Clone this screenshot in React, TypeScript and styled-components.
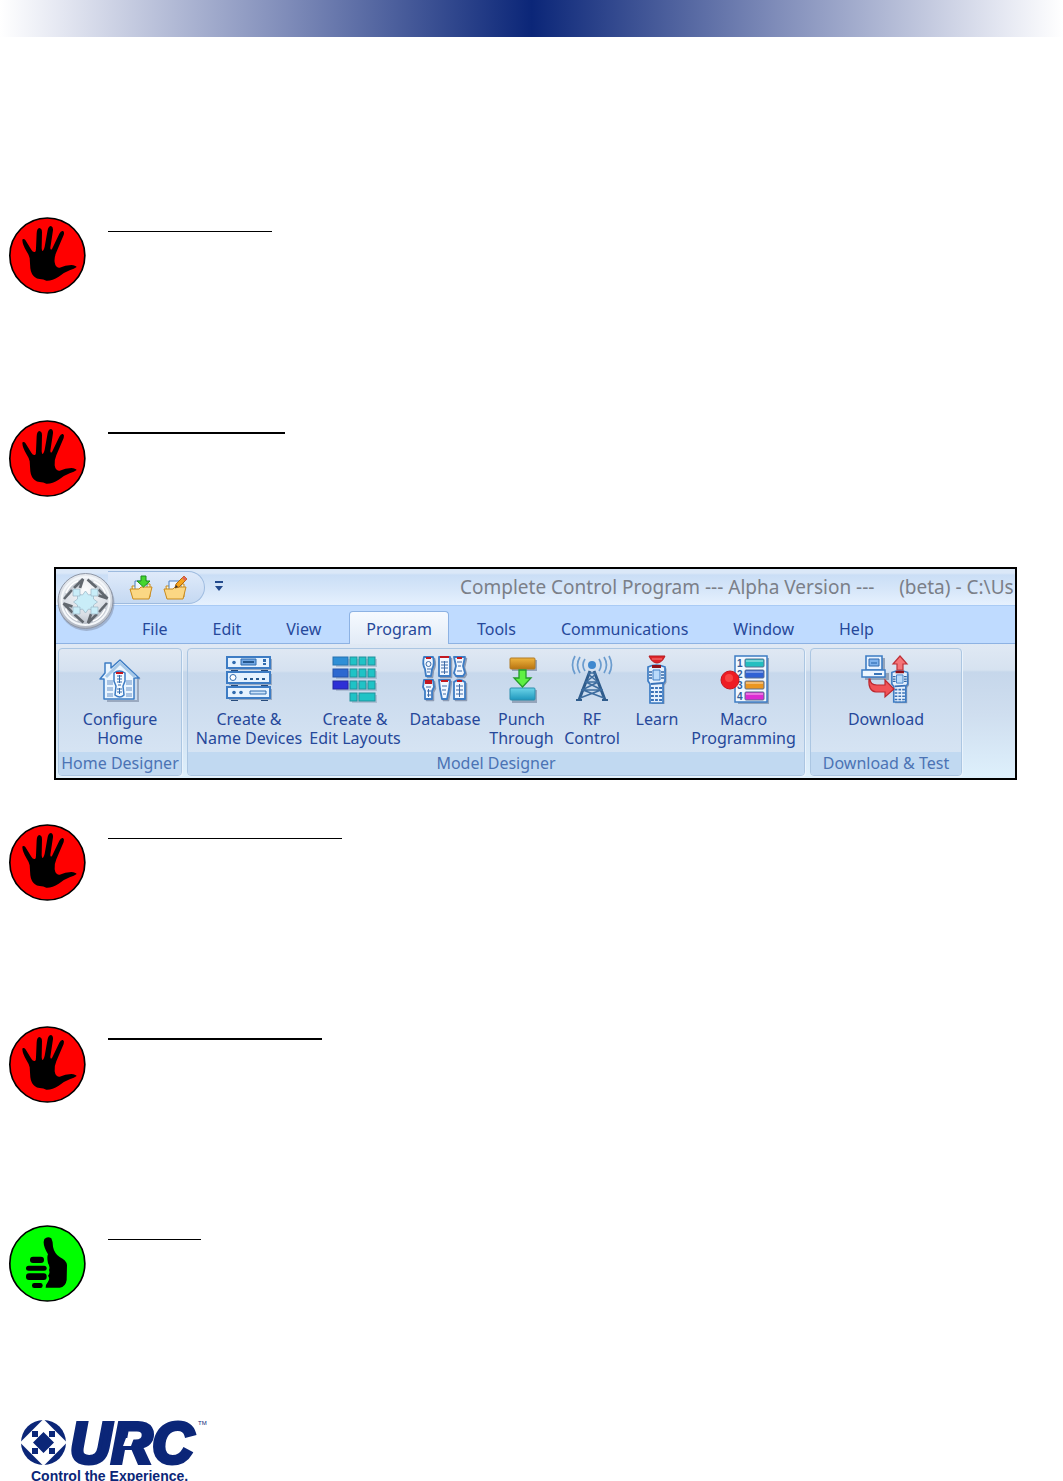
import React from 'react';
import styled, { createGlobalStyle } from 'styled-components';

const GlobalStyle = createGlobalStyle`
  * { box-sizing: border-box; }
  body {
    margin: 0;
    background: #fff;
    overflow: hidden;
    font-family: "Noto Sans", "Open Sans", sans-serif;
  }
`;

const Page = styled.main`
  display: flex;
  flex-direction: column;
`;

const Banner = styled.header`
  height: 37px;
  margin-bottom: 180px;
  background: linear-gradient(90deg, #fff 0%, #e3e6f1 6%, #7f8cb9 27%, #0b2678 50%, #7f8cb9 73%, #e3e6f1 94%, #fff 100%);
`;

const Note = styled.section<{ $space: number }>`
  display: flex;
  align-items: flex-start;
  gap: 22px;
  padding-left: 9px;
  min-height: ${(p) => p.$space}px;
`;

const Badge = styled.svg`
  width: 77px;
  height: 77px;
  flex: none;
`;

const Rule = styled.hr<{ $length: number; $thick?: boolean }>`
  width: ${(p) => p.$length}px;
  height: ${(p) => (p.$thick ? 2 : 1)}px;
  margin: ${(p) => (p.$thick ? 12 : 14)}px 0 0;
  border: 0;
  background: #000;
`;

const Ribbon = styled.section`
  position: relative;
  margin: 0 46px 44px 54px;
  border: 2px solid #000;
  overflow: hidden;
  background: #bfdbff;
`;

const TitleBar = styled.div`
  display: flex;
  align-items: flex-start;
  height: 37px;
  padding: 2px 0 0 52px;
  border-bottom: 1px solid #a9cbf5;
  background: linear-gradient(#dbe8f8 0 4px, #cadef6 6px, #d6e6f9 20px, #e6f1fe);
`;

const QuickAccess = styled.div`
  display: flex;
  align-items: center;
  gap: 10px;
  width: 97px;
  height: 33px;
  flex: none;
  padding-left: 21px;
  border: 1px solid #9ebbdf;
  border-left: 0;
  border-radius: 0 17px 17px 0;
  background: linear-gradient(#dfeafa, #c5d9f2);
`;

const ToolButton = styled.button`
  display: flex;
  padding: 0;
  border: 0;
  background: none;
  svg { width: 24px; height: 26px; }
`;

const MoreButton = styled(ToolButton)`
  flex: none;
  margin: 9px 0 0 9px;
  svg { width: 10px; height: 12px; }
`;

const Title = styled.h1`
  flex: none;
  margin: 2px 0 0 236px;
  font-size: 19px;
  font-weight: 400;
  line-height: 28px;
  color: #7b7f88;
  white-space: pre;
`;

const Orb = styled.button`
  position: absolute;
  left: 0;
  top: 3px;
  display: flex;
  padding: 0;
  border: 0;
  background: none;
  svg { width: 60px; height: 60px; }
`;

const Tabs = styled.nav`
  display: flex;
  align-items: flex-end;
  gap: 11px;
  height: 38px;
  padding-left: 69px;
  border-bottom: 1px solid #8db2e3;
`;

const Tab = styled.button<{ $active?: boolean }>`
  height: 33px;
  margin-bottom: -1px;
  padding: 1px 16px 0;
  border: 1px solid ${(p) => (p.$active ? '#8db2e3' : 'transparent')};
  border-bottom: 0;
  border-radius: 4px 4px 0 0;
  background: ${(p) => (p.$active ? 'linear-gradient(#f6faff, #e2ebf6)' : 'none')};
  font: 16px/20px "Noto Sans", sans-serif;
  color: #26489a;
`;

const Panels = styled.div`
  display: flex;
  gap: 5px;
  height: 134px;
  padding: 4px 2px 2px;
  background: linear-gradient(#e0e9f4, #d6e2f0 26px, #c6d7eb 28px, #cfdeef 70px, #def0fc);
`;

const Group = styled.section<{ $width: number }>`
  display: flex;
  flex-direction: column;
  width: ${(p) => p.$width}px;
  flex: none;
  border: 1px solid #abc6e2;
  border-radius: 4px;
  overflow: hidden;
  box-shadow: 1px 1px 0 #eaf3fc;
  background: linear-gradient(#dfe8f3, #d5e1f0 22px, #c7d8ec 24px, #dae7f5);
`;

const Commands = styled.div`
  display: flex;
  flex: 1;
  justify-content: center;
`;

const Command = styled.button<{ $width: number }>`
  display: flex;
  flex-direction: column;
  align-items: center;
  gap: 6px;
  width: ${(p) => p.$width}px;
  padding: 5px 0 0;
  border: 0;
  background: none;
  font: 16px/19px "Noto Sans", sans-serif;
  color: #26489a;
  white-space: pre;
  svg { width: 50px; height: 50px; flex: none; }
`;

const GroupName = styled.h2`
  margin: 0;
  height: 23px;
  background: #c1d9f1;
  font-size: 16px;
  font-weight: 400;
  line-height: 23px;
  text-align: center;
  white-space: nowrap;
  color: #4b73b4;
`;

const Footer = styled.footer`
  padding-left: 20px;
`;

const Logo = styled.svg`
  display: block;
  width: 190px;
  height: 49px;
  overflow: visible;
`;

const Tagline = styled.p`
  margin: 0 0 0 11px;
  font: bold 14px/14px "Liberation Sans", Arial, sans-serif;
  color: #0b2678;
`;

const Hand = () => (
  <Badge viewBox="26 36 231 231" role="img" aria-label="Stop">
    <circle cx="141" cy="151.500" r="112.500" fill="#f00" stroke="#000" strokeWidth="5" />
    <path d="M66 106C66 100 72 101 75 105L93 134Q98 143 104 141Q107 140 107 130L109 85Q110 70 117 69Q125 70 125 82L124 130Q125 140 128 137Q131 134 133 125L142 75Q145 63 152 63Q159 65 158 76L150 128Q150 137 155 132L177 86Q182 76 188 78Q193 81 190 90L168 142Q161 158 163 172Q166 190 178 188Q195 180 213 180Q226 181 229 186Q222 192 208 196Q190 203 175 215Q155 228 138 227Q130 223 118 222Q109 222 104 217Q92 208 90 190L88 160Q86 150 78 138Q67 120 66 106Z" />
  </Badge>
);

const Thumb = () => (
  <Badge viewBox="26 30 231 231" role="img" aria-label="Go">
    <circle cx="141" cy="145.500" r="112.500" fill="#0f0" stroke="#000" strokeWidth="5" />
    <path d="M132 72Q142 62 153 70Q158 80 158 95Q162 115 178 126Q198 135 200 150L199 195Q196 216 178 218L136 218Q136 208 143 200Q150 190 143 182Q150 175 146 165Q150 155 143 145Q139 125 143 118Q129 95 130 80Z" />
    <rect x="89" y="125" width="42" height="19" rx="9" />
    <rect x="77" y="152" width="62" height="15" rx="8" />
    <rect x="77" y="175" width="62" height="20" rx="9" />
    <rect x="95" y="204" width="32" height="15" rx="7" />
  </Badge>
);

const blue = '#3d7cc4';

const FolderBase = () => (
  <>
    <path d="M3 11h5l2-2h11v13H4z" fill="#fff6cf" stroke="#c98a1b" />
    <path d="M6 6h12v10H6z" fill="#eef5ff" stroke="#4a7fc0" />
    <path d="M1 14h9l2-2h11l-3 12H4z" fill="#fbd784" stroke="#c98a1b" strokeLinejoin="round" />
  </>
);

const OpenIcon = () => (
  <svg viewBox="0 0 24 26">
    <FolderBase />
    <path d="M12 1h5v5h4l-6.500 6L8 6h4z" fill="#45d62e" stroke="#1b8d1c" />
  </svg>
);

const EditIcon = () => (
  <svg viewBox="0 0 24 26">
    <FolderBase />
    <path d="M12 13l1-4 8-8 3 3-8 8z" fill="#f5a41c" stroke="#b4690d" />
    <path d="M19 3l2-2 3 3-2 2z" fill="#e0645a" />
    <path d="M12 13l1-3 2 2z" fill="#333" />
  </svg>
);

const OrbIcon = () => (
  <svg viewBox="0 0 60 60">
    <defs>
      <radialGradient id="orb" cx=".5" cy=".3" r=".75">
        <stop offset="0" stopColor="#fbfcfd" />
        <stop offset=".6" stopColor="#d9dee5" />
        <stop offset="1" stopColor="#a5abb7" />
      </radialGradient>
    </defs>
    <circle cx="30.500" cy="31" r="28" fill="#75809a" opacity=".45" />
    <circle cx="29.500" cy="29" r="27.500" fill="url(#orb)" stroke="#8f97a6" />
    <circle cx="29.500" cy="29" r="24" fill="none" stroke="#f4f7fa" strokeWidth="2" />
    {[0, 90, 180, 270].map((a) => (
      <g key={a} transform={`rotate(${a} 29.500 29)`}>
        <path d="M8 27Q10 12 27 7L24 16 18 15 14 23z" fill="#c3c9d1" />
        <path d="M8 27L16 18M18 16L27 7L24 16" fill="none" stroke="#62686f" strokeWidth="2.600" />
        <path d="M10 21Q14 12 22 9" fill="none" stroke="#fff" strokeWidth="1.500" />
      </g>
    ))}
    <g fill="#c9edf8" stroke="#9bb4c4" strokeWidth=".7">
      <path d="M29.500 19l3 4 5-1v5l4 3-4 3v5l-5-1-3 4-3-4-5 1v-5l-4-3 4-3v-5l5 1z" />
      <path d="M17 17h7v7h-7zM35 17h7v7h-7zM17 35h7v7h-7zM35 35h7v7h-7z" />
    </g>
  </svg>
);

const HomeIcon = () => (
  <svg viewBox="0 0 50 50">
    <path d="M12 47h31V25l2-1" fill="none" stroke="#9aa9bf" strokeWidth="2" />
    <path d="M9 45V25H5l5-6V9h6v5l9-8 19 18h-5v21z" fill="#eaf5ff" stroke={blue} strokeWidth="1.500" strokeLinejoin="round" />
    <path d="M11 23L25 9l15 14" fill="none" stroke="#a8c9e8" strokeWidth="3" />
    <path d="M12 26h6v5h-6zM12 33h6v4h-6zM12 39h6v4h-6zM31 26h6v5h-6zM31 33h6v4h-6zM31 39h6v4h-6z" fill="#a8c3e3" />
    <path d="M19 19q5-4 11 0v8l-2 5 1 9q-4 4-9 0l1-9-2-5z" fill="#f5faff" stroke={blue} strokeWidth="1.500" />
    <path d="M21 18h7v2h-7z" fill="#c9151b" />
    <path d="M22 22h5M22 25h5M22 28h5M23 31h3M22 35h5M22 38h5M24.500 21v8M24.500 34v6" stroke="#326bad" />
  </svg>
);

const DevicesIcon = () => (
  <svg viewBox="0 0 50 50">
    <path d="M7 14h7v4H7zM37 14h7v4h-7zM7 29h7v4H7zM37 29h7v4h-7zM7 44h7v3H7zM37 44h7v3h-7z" fill="#274b7c" />
    {[3, 18, 33].map((y) => (
      <g key={y}>
        <rect x="5" y={y + 2} width="43" height="11" fill="#98a9c0" />
        <rect x="3" y={y} width="43" height="11" fill="#e5f2ff" stroke={blue} strokeWidth="2" />
      </g>
    ))}
    <path d="M17 5h15v6H17z" fill="#71a7e4" stroke="#316caf" />
    <path d="M19 8h11" stroke="#25588f" strokeWidth="2" />
    <circle cx="10" cy="8.500" r="1.800" fill="#316caf" />
    <path d="M39 5h3v3h-3zM39 9h3v2h-3z" fill="#316caf" />
    <circle cx="9" cy="23.500" r="3" fill="#fff" stroke="#316caf" />
    <path d="M20 24h3v2h-3zM26 24h3v2h-3zM32 24h3v2h-3zM38 24h3v2h-3z" fill="#25588f" />
    <circle cx="10" cy="38.500" r="1.800" fill="#316caf" />
    <circle cx="17" cy="38.500" r="1.800" fill="#316caf" />
    <path d="M26 37h16v3H26z" fill="#cde4fb" stroke="#316caf" />
  </svg>
);

const LayoutsIcon = () => (
  <svg viewBox="0 0 50 50">
    <path d="M6 5h41v8H6zM6 17h41v8H6zM6 29h41v8H6zM22 41h25v8H22z" fill="#8fa0b8" opacity=".5" />
    <rect x="3" y="3" width="15" height="8" fill="#2f8fd6" stroke="#2672b0" />
    <rect x="3" y="15" width="15" height="8" fill="#2d68d0" stroke="#2553a8" />
    <rect x="3" y="27" width="15" height="8" fill="#2d2ed6" stroke="#2526a0" />
    <g fill="#1fc3c6" stroke="#23919c">
      {[3, 15, 27].map((y) => [20, 29, 38].map((x) => (
        <rect key={`${x}-${y}`} x={x} y={y} width="7" height="8" />
      )))}
      <rect x="20" y="39" width="7" height="8" />
      <rect x="29" y="39" width="16" height="8" />
    </g>
  </svg>
);

const DatabaseIcon = () => (
  <svg viewBox="0 0 50 50">
    {[
      'M4 3h9q2 7-1 12l-1 7H6l-1-7Q2 10 4 3z',
      'M19 3h11v19H19z',
      'M34 3h11l-2 9 2 7-2 3h-7l-2-3 2-7z',
      'M4 26h9l1 7-2 4v8H5v-8l-2-4z',
      'M19 26h11l-1 9-2 10h-5l-2-10z',
      'M34 28q5-4 11 0v17H34z',
    ].map((d) => (
      <g key={d} strokeLinejoin="round">
        <path d={d} transform="translate(1.500 1.500)" fill="#8d9bb3" stroke="#8d9bb3" strokeWidth="1.500" />
        <path d={d} fill="#f1f7ff" stroke={blue} strokeWidth="1.800" />
      </g>
    ))}
    <path d="M6 3h5v2H6zM20 2h9v2h-9zM37 3h5v2h-5zM5 26h7v4H5zM21 26h7v2h-7zM37 26h5v2h-5z" fill="#c31820" />
    <circle cx="8.500" cy="10" r="2.500" fill="none" stroke="#3c6ba8" />
    <path d="M7 15h4M7 18h3M21 8h7M21 11h7M21 14h7M21 18h7M37 8h5M38 12h3M37 17h5M6 33h5M7 37h4M7 41h4M22 32h5M22 36h4M23 40h3M36 32h7M36 36h7M36 40h7" stroke="#3c6ba8" strokeWidth="1.200" />
    <path d="M24.500 7v13M39.500 30v13M8.500 35v8" stroke="#3c6ba8" />
  </svg>
);

const PunchIcon = () => (
  <svg viewBox="0 0 50 50">
    <defs>
      <linearGradient id="gold" x2="0" y2="1"><stop stopColor="#efb43e" /><stop offset="1" stopColor="#b87411" /></linearGradient>
      <linearGradient id="aqua" x2="0" y2="1"><stop stopColor="#6cd4e8" /><stop offset="1" stopColor="#1e97bd" /></linearGradient>
    </defs>
    <path d="M15 6h25v11H15zM15 36h25v13H15z" fill="#95a5bb" />
    <rect x="13" y="4" width="25" height="11" rx="1" fill="url(#gold)" stroke="#b07a25" />
    <rect x="13" y="34" width="25" height="12" rx="1" fill="url(#aqua)" stroke="#2c8fae" />
    <path d="M22 16h7v8h5l-8.500 9L17 24h5z" fill="#5ff043" stroke="#249c2a" strokeWidth="1.300" />
  </svg>
);

const TowerIcon = () => (
  <svg viewBox="0 0 50 50" fill="none">
    <circle cx="25" cy="11" r="4" fill="#4189cf" />
    <path d="M18 5q-4 6 0 12M13 3q-5 8 0 16M8 2q-5 9 0 18M32 5q4 6 0 12M37 3q5 8 0 16M42 2q5 9 0 18" stroke="#6b9cce" strokeWidth="1.700" />
    <path d="M23 17L12 46M27 17l11 29" stroke="#2f5c8c" strokeWidth="3" />
    <path d="M21 19h8M19 28h12M21 20l10 8-16 8M29 20l-10 8 16 8M14 36h22M13 44l21-8M37 44l-21-8" stroke="#3e6d9f" strokeWidth="1.600" />
    <path d="M9 46h6M35 46h6" stroke="#2f5c8c" strokeWidth="2" />
  </svg>
);

const RemoteShape = () => (
  <>
    <path d="M2 3q8-4 17 0v14l-2 3v19H4V20l-2-3z" transform="translate(1.500 1.500)" fill="#8d9bb3" />
    <path d="M2 3q8-4 17 0v14l-2 3v19H4V20l-2-3z" fill="#e5f0fd" stroke={blue} strokeWidth="1.700" />
    <path d="M6 1h9v3H6z" fill="#8f1118" />
    <path d="M7 6h7v10H7z" fill="#b9dafa" stroke={blue} />
    <path d="M3 8h3M3 11h3M3 14h3M15 8h3M15 11h3M15 14h3" stroke="#3568a6" strokeWidth="1.500" />
    <path d="M5 20l12-1M5 24h11M5 28h11M5 32h11M5 36h11" stroke="#3971b7" strokeWidth="2" />
    <path d="M8.500 22v16M12.500 22v16" stroke="#e5f0fd" strokeWidth="1.200" />
  </>
);

const LearnIcon = () => (
  <svg viewBox="0 0 50 50">
    <path d="M17 2h16q-3 7-8 7t-8-7z" fill="#e0262b" stroke="#b31a20" />
    <path d="M20 5h10" stroke="#f77d7d" />
    <g transform="translate(14 10)"><RemoteShape /></g>
  </svg>
);

const MacroIcon = () => (
  <svg viewBox="0 0 50 50">
    <path d="M19 4h31v46H19z" fill="#91a3bb" />
    <rect x="16" y="2" width="32" height="46" fill="#f1f8ff" stroke={blue} strokeWidth="1.500" />
    {['#22bfc0', '#2f61d4', '#eb9620', '#dc2bd2'].map((c, i) => (
      <g key={c}>
        <rect x="26" y={5 + i * 11} width="19" height="8" rx="1" fill={c} stroke="#596f91" />
        <path d={`M27 ${7 + i * 11}h17`} stroke="#fff" opacity=".35" strokeWidth="2" />
        <text x="18" y={13 + i * 11} fontFamily="Liberation Sans" fontWeight="bold" fontSize="10" fill="#315e99">{i + 1}</text>
      </g>
    ))}
    <circle cx="11" cy="26" r="9" fill="#ee1c23" stroke="#c5151c" />
    <circle cx="10" cy="24" r="4" fill="#ff5f56" opacity=".6" />
  </svg>
);

const DownloadIcon = () => (
  <svg viewBox="0 0 50 50">
    <path d="M6 4h18v15h4v7H4v-7h2z" fill="#91a3bb" />
    <path d="M5 2h16v14H5z" fill="#e7f2ff" stroke={blue} strokeWidth="1.600" />
    <path d="M8 5h10v7H8z" fill="#7db1ec" stroke="#326bae" />
    <path d="M10 9h6" stroke="#2361a8" />
    <path d="M1 16h23v7H1z" fill="#edf6ff" stroke={blue} strokeWidth="1.500" />
    <path d="M13 20h8" stroke="#3975b9" strokeWidth="2" />
    <g transform="translate(29 16) scale(.93 .82)"><RemoteShape /></g>
    <path d="M39 2l7 8h-4v6h-6v-6h-4z" fill="#f57478" stroke="#bf3037" strokeWidth="1.200" />
    <path d="M9 25q0 6 7 6h8v-5l9 9-9 8v-5h-9q-8-1-7-13z" fill="#f05257" stroke="#bd2930" strokeWidth="1.200" />
  </svg>
);

const tabs = ['File', 'Edit', 'View', 'Program', 'Tools', 'Communications', 'Window', 'Help'];

const groups = [
  { name: 'Home Designer', width: 124, commands: [{ label: 'Configure\nHome', width: 116, icon: <HomeIcon /> }] },
  {
    name: 'Model Designer',
    width: 618,
    commands: [
      { label: 'Create &\nName Devices', width: 112, icon: <DevicesIcon /> },
      { label: 'Create &\nEdit Layouts', width: 100, icon: <LayoutsIcon /> },
      { label: 'Database', width: 80, icon: <DatabaseIcon /> },
      { label: 'Punch\nThrough', width: 73, icon: <PunchIcon /> },
      { label: 'RF\nControl', width: 68, icon: <TowerIcon /> },
      { label: 'Learn', width: 62, icon: <LearnIcon /> },
      { label: 'Macro\nProgramming', width: 111, icon: <MacroIcon /> },
    ],
  },
  { name: 'Download & Test', width: 152, commands: [{ label: 'Download', width: 120, icon: <DownloadIcon /> }] },
];

export default function App() {
  return (
    <Page>
      <GlobalStyle />
      <Banner />
      <Note $space={203}><Hand /><Rule $length={164} /></Note>
      <Note $space={147}><Hand /><Rule $length={177} $thick /></Note>
      <Ribbon>
        <TitleBar>
          <QuickAccess>
            <ToolButton aria-label="Open"><OpenIcon /></ToolButton>
            <ToolButton aria-label="Edit file"><EditIcon /></ToolButton>
          </QuickAccess>
          <MoreButton aria-label="Customize">
            <svg viewBox="0 0 10 12"><path d="M1 1h8v2H1zM1 6h8L5 11z" fill="#234a8d" /></svg>
          </MoreButton>
          <Title>{'Complete Control Program --- Alpha Version ---     (beta) - C:\\Us'}</Title>
        </TitleBar>
        <Tabs>
          {tabs.map((t) => <Tab key={t} $active={t === 'Program'}>{t}</Tab>)}
        </Tabs>
        <Panels>
          {groups.map((g) => (
            <Group key={g.name} $width={g.width}>
              <Commands>
                {g.commands.map((c) => (
                  <Command key={c.label} $width={c.width}>{c.icon}<span>{c.label}</span></Command>
                ))}
              </Commands>
              <GroupName>{g.name}</GroupName>
            </Group>
          ))}
        </Panels>
        <Orb aria-label="Main menu"><OrbIcon /></Orb>
      </Ribbon>
      <Note $space={202}><Hand /><Rule $length={234} /></Note>
      <Note $space={199}><Hand /><Rule $length={214} $thick /></Note>
      <Note $space={195}><Thumb /><Rule $length={93} /></Note>
      <Footer>
        <Logo viewBox="0 0 190 49" role="img" aria-label="URC">
          <g fill="#0b2678">
            <circle cx="23.500" cy="22.500" r="22.500" />
            <path d="M23.500-1L47 22.500 23.500 46 0 22.500z" fill="#fff" />
            <path d="M23.500 12l10.500 10.500L23.500 33 13 22.500zM12 11h6v6h-6zM29 11h6v6h-6zM12 28h6v6h-6zM29 28h6v6h-6z" />
            <text x="50" y="43" fontFamily="Liberation Sans" fontWeight="bold" fontStyle="italic" fontSize="57" stroke="#0b2678" strokeWidth="4">URC</text>
            <path d="M103 26l3-8h8l-3 8z" fill="#fff" />
            <text x="178" y="5" fontFamily="Liberation Sans" fontSize="6">TM</text>
          </g>
        </Logo>
        <Tagline>Control the Experience.</Tagline>
      </Footer>
    </Page>
  );
}
